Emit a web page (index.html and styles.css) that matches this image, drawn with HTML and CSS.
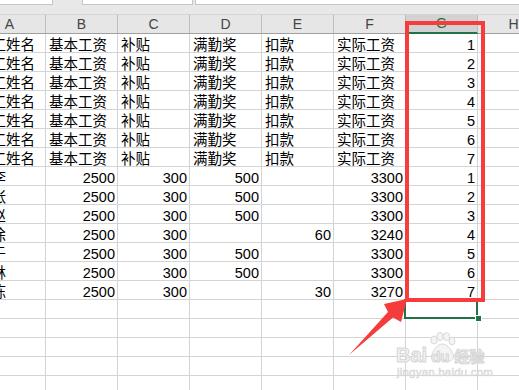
FILE: index.html
```html
<!DOCTYPE html>
<html lang="zh">
<head>
<meta charset="utf-8">
<title>工资表</title>
<link rel="stylesheet" href="styles.css">
</head>
<body>
<div class="app">
  <div class="toolbar">
    <div class="fbox namebox"></div>
    <div class="fbox midbox"></div>
    <div class="fbox formulabox"></div>
  </div>
  <div class="sheet">
    <div class="row head">
      <div class="ch">A</div><div class="ch">B</div><div class="ch">C</div><div class="ch">D</div><div class="ch">E</div><div class="ch">F</div><div class="ch sel">G</div><div class="ch">H</div>
    </div>
    <div class="row"><div class="c t">员工姓名</div><div class="c t">基本工资</div><div class="c t">补贴</div><div class="c t">满勤奖</div><div class="c t">扣款</div><div class="c t">实际工资</div><div class="c n">1</div><div class="c"></div></div>
    <div class="row"><div class="c t">员工姓名</div><div class="c t">基本工资</div><div class="c t">补贴</div><div class="c t">满勤奖</div><div class="c t">扣款</div><div class="c t">实际工资</div><div class="c n">2</div><div class="c"></div></div>
    <div class="row"><div class="c t">员工姓名</div><div class="c t">基本工资</div><div class="c t">补贴</div><div class="c t">满勤奖</div><div class="c t">扣款</div><div class="c t">实际工资</div><div class="c n">3</div><div class="c"></div></div>
    <div class="row"><div class="c t">员工姓名</div><div class="c t">基本工资</div><div class="c t">补贴</div><div class="c t">满勤奖</div><div class="c t">扣款</div><div class="c t">实际工资</div><div class="c n">4</div><div class="c"></div></div>
    <div class="row"><div class="c t">员工姓名</div><div class="c t">基本工资</div><div class="c t">补贴</div><div class="c t">满勤奖</div><div class="c t">扣款</div><div class="c t">实际工资</div><div class="c n">5</div><div class="c"></div></div>
    <div class="row"><div class="c t">员工姓名</div><div class="c t">基本工资</div><div class="c t">补贴</div><div class="c t">满勤奖</div><div class="c t">扣款</div><div class="c t">实际工资</div><div class="c n">6</div><div class="c"></div></div>
    <div class="row"><div class="c t">员工姓名</div><div class="c t">基本工资</div><div class="c t">补贴</div><div class="c t">满勤奖</div><div class="c t">扣款</div><div class="c t">实际工资</div><div class="c n">7</div><div class="c"></div></div>
    <div class="row"><div class="c t">小李</div><div class="c n">2500</div><div class="c n">300</div><div class="c n">500</div><div class="c n"></div><div class="c n">3300</div><div class="c n">1</div><div class="c"></div></div>
    <div class="row"><div class="c t">小张</div><div class="c n">2500</div><div class="c n">300</div><div class="c n">500</div><div class="c n"></div><div class="c n">3300</div><div class="c n">2</div><div class="c"></div></div>
    <div class="row"><div class="c t">小赵</div><div class="c n">2500</div><div class="c n">300</div><div class="c n">500</div><div class="c n"></div><div class="c n">3300</div><div class="c n">3</div><div class="c"></div></div>
    <div class="row"><div class="c t">小徐</div><div class="c n">2500</div><div class="c n">300</div><div class="c n"></div><div class="c n">60</div><div class="c n">3240</div><div class="c n">4</div><div class="c"></div></div>
    <div class="row"><div class="c t">小于</div><div class="c n">2500</div><div class="c n">300</div><div class="c n">500</div><div class="c n"></div><div class="c n">3300</div><div class="c n">5</div><div class="c"></div></div>
    <div class="row"><div class="c t">小林</div><div class="c n">2500</div><div class="c n">300</div><div class="c n">500</div><div class="c n"></div><div class="c n">3300</div><div class="c n">6</div><div class="c"></div></div>
    <div class="row"><div class="c t">小陈</div><div class="c n">2500</div><div class="c n">300</div><div class="c n"></div><div class="c n">30</div><div class="c n">3270</div><div class="c n">7</div><div class="c"></div></div>
    <div class="row"><div class="c"></div><div class="c"></div><div class="c"></div><div class="c"></div><div class="c"></div><div class="c"></div><div class="c"></div><div class="c"></div></div>
    <div class="row"><div class="c"></div><div class="c"></div><div class="c"></div><div class="c"></div><div class="c"></div><div class="c"></div><div class="c"></div><div class="c"></div></div>
    <div class="row"><div class="c"></div><div class="c"></div><div class="c"></div><div class="c"></div><div class="c"></div><div class="c"></div><div class="c"></div><div class="c"></div></div>
    <div class="row"><div class="c"></div><div class="c"></div><div class="c"></div><div class="c"></div><div class="c"></div><div class="c"></div><div class="c"></div><div class="c"></div></div>
    <div class="row"><div class="c"></div><div class="c"></div><div class="c"></div><div class="c"></div><div class="c"></div><div class="c"></div><div class="c"></div><div class="c"></div></div>
  </div>

  <div class="selcell"></div>
  <div class="handle"></div>
  <div class="redbox"></div>
  <svg class="arrow" width="519" height="390" viewBox="0 0 519 390">
    <polygon points="407,299 384,304 388,312 349,355 393,317.5 401,322" fill="#f43c3c"/>
  </svg>

  <div class="watermark">
    <svg class="paw" width="30" height="30" viewBox="0 0 30 30">
      <g fill="#f4f4f4" stroke="#d8d8d8" stroke-width="1">
        <ellipse cx="7" cy="8" rx="3.2" ry="4"/>
        <ellipse cx="13" cy="4.5" rx="3.2" ry="4"/>
        <ellipse cx="19.5" cy="4.5" rx="3.2" ry="4"/>
        <ellipse cx="25" cy="9" rx="3" ry="3.8"/>
        <path d="M15.5 12 C 10 12, 5 20, 4.5 24 C 4 28, 8 29.5, 11 28.5 C 13.5 27.8, 17.5 27.8, 20 28.5 C 23 29.5, 27 28, 26.5 24 C 26 20, 21 12, 15.5 12 Z"/>
      </g>
    </svg>
    <div class="wm-line">
      <span class="wm-bai">Bai</span><span class="wm-du">du</span><span class="wm-jy">经验</span>
    </div>
    <div class="wm-url">jingyan.baidu.com</div>
  </div>
</div>
</body>
</html>
```

FILE: styles.css
```css
* {
  box-sizing: border-box;
}

body {
  margin: 0;
  background: #ffffff;
  font-family: "Liberation Sans", "Noto Sans CJK SC", sans-serif;
}

.app {
  position: relative;
  width: 519px;
  height: 390px;
  overflow: hidden;
  background: #ffffff;
}

.toolbar {
  display: flex;
  align-items: flex-start;
  height: 15px;
  background: #e8e8e8;
  border-bottom: 1px solid #d4d4d4;
}

.fbox {
  height: 5px;
  background: #ffffff;
  border-bottom: 1px solid #c6c6c6;
}

.namebox {
  width: 53px;
  border-right: 1px solid #c6c6c6;
}

.midbox {
  width: 111px;
  margin-left: 29px;
  border-left: 1px solid #c6c6c6;
  border-right: 1px solid #c6c6c6;
}

.formulabox {
  flex: 1;
  margin-left: 2px;
  border-left: 1px solid #c6c6c6;
}

.sheet {
  margin-left: -26px;
}

.row {
  display: grid;
  grid-template-columns: repeat(8, 72px);
  height: 19px;
}

.c {
  height: 19px;
  border-right: 1px solid #d4d4d4;
  border-bottom: 1px solid #d4d4d4;
  font-size: 14.5px;
  line-height: 14px;
  padding-top: 4px;
  white-space: nowrap;
  overflow: hidden;
  color: #000000;
}

.t {
  padding-left: 3px;
}

.n {
  text-align: right;
  padding-right: 2px;
}

.head .ch {
  height: 19px;
  background: #e6e6e6;
  border-right: 1px solid #bdbdbd;
  border-bottom: 1px solid #9f9f9f;
  text-align: center;
  font-size: 14px;
  line-height: 18px;
  color: #444444;
}

.head .ch.sel {
  background: #d2d2d2;
  color: #217346;
  border-bottom: 2px solid #217346;
  line-height: 17px;
}

.selcell {
  position: absolute;
  left: 404px;
  top: 299px;
  width: 74px;
  height: 20px;
  border: 2px solid #217346;
}

.handle {
  position: absolute;
  left: 475px;
  top: 315px;
  width: 7px;
  height: 7px;
  background: #217346;
  border: 1px solid #ffffff;
}

.redbox {
  position: absolute;
  left: 405px;
  top: 21px;
  width: 80px;
  height: 281px;
  border: 4px solid #f83c3c;
}

.arrow {
  position: absolute;
  left: 0;
  top: 0;
}

.watermark {
  position: absolute;
  left: 396px;
  top: 331px;
  width: 96px;
  height: 50px;
}

.paw {
  position: absolute;
  left: 31px;
  top: 1px;
}

.wm-line {
  position: absolute;
  left: 0;
  top: 13px;
  display: flex;
  align-items: baseline;
  white-space: nowrap;
}

.wm-bai,
.wm-du,
.wm-jy {
  color: #f3f3f3;
  -webkit-text-stroke: 1px #d6d6d6;
  font-weight: bold;
}

.wm-bai {
  font-size: 20px;
  letter-spacing: 0px;
}

.wm-du {
  font-size: 15px;
  margin-left: 4px;
}

.wm-jy {
  font-size: 15px;
  margin-left: 5px;
  font-family: "Noto Sans CJK SC", sans-serif;
}

.wm-url {
  position: absolute;
  left: 1px;
  top: 35px;
  font-size: 11.5px;
  color: #e4e4e4;
  -webkit-text-stroke: 0.4px #d2d2d2;
  white-space: nowrap;
  letter-spacing: 0.2px;
}
```
